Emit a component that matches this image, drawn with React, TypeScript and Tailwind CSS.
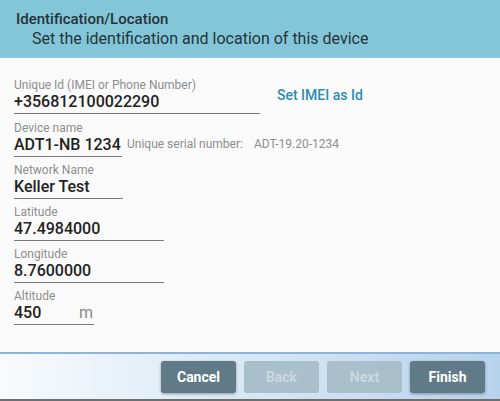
import React from "react";

// ─── FIELD ─────────────────────────────────────────────────────────────────────
function Field({ label, value, width, unit, className = "" }: { label: string; value: string; width: string; unit?: string; className?: string }) {
  return (
    <div className={`${width} ${className} flex flex-col border-b border-[#7a7a7a] pb-[1px]`}>
      <span className="h-[13px] text-[12px] leading-[13px] text-[#8e8e8e] whitespace-nowrap">{label}</span>
      <div className="flex h-[20px] items-baseline justify-between">
        <span className="text-[16px] leading-[20px] font-medium text-[#222222] whitespace-nowrap">{value}</span>
        {unit && <span className="pr-[1px] text-[16px] leading-[20px] text-[#8a8a8a]">{unit}</span>}
      </div>
    </div>
  );
}

export default function App() {
  return (
    <div className="flex h-[401px] w-[500px] flex-col overflow-hidden bg-[#fafafa]" style={{ fontFamily: "Roboto, 'Noto Sans', sans-serif" }}>
      {/* Header */}
      <div className="flex h-[58px] flex-shrink-0 flex-col border-b border-[#9cc3dc] bg-[#82c6d8] pl-[16px] pt-[9px] text-[#25343b]">
        <span className="text-[15px] font-medium leading-[20px]">Identification/Location</span>
        <span className="pl-[16px] text-[16px] leading-[20px]">Set the identification and location of this device</span>
      </div>

      {/* Content */}
      <div className="flex flex-1 flex-col gap-[7px] pl-[14px] pt-[21px]">
        <div className="mb-[1px] flex items-center">
          <Field label="Unique Id (IMEI or Phone Number)" value="+356812100022290" width="w-[246px]" />
          <button className="ml-[17px] pb-[4px] text-[14px] font-medium leading-[20px] text-[#2b8cb3]">Set IMEI as Id</button>
        </div>
        <div className="flex items-end">
          <Field label="Device name" value="ADT1-NB 1234" width="w-[108px]" />
          <div className="ml-[5px] flex pb-[6px] text-[12px] leading-[13px] text-[#8e8e8e]">
            <span>Unique serial number:</span>
            <span className="ml-[11px]">ADT-19.20-1234</span>
          </div>
        </div>
        <Field label="Network Name" value="Keller Test" width="w-[109px]" />
        <Field label="Latitude" value="47.4984000" width="w-[150px]" />
        <Field label="Longitude" value="8.7600000" width="w-[150px]" />
        <Field label="Altitude" value="450" unit="m" width="w-[80px]" />
      </div>

      {/* Footer */}
      <div className="flex h-[47px] flex-shrink-0 items-start justify-end gap-[8px] border-t-2 border-[#8db3d6] bg-gradient-to-r from-[#f8fbfd] to-[#b7d3ec] pr-[15px] pt-[7px]">
        <button className="h-[32px] w-[75px] rounded-[3px] bg-[#607b87] text-[14px] font-bold text-white shadow-[0_1px_3px_rgba(0,0,0,0.35)]">Cancel</button>
        <button className="h-[32px] w-[75px] rounded-[3px] bg-[#a9bfcb] text-[14px] font-bold text-[#c9d8e0]">Back</button>
        <button className="h-[32px] w-[75px] rounded-[3px] bg-[#a9bfcb] text-[14px] font-bold text-[#c9d8e0]">Next</button>
        <button className="h-[32px] w-[75px] rounded-[3px] bg-[#607b87] text-[14px] font-bold text-white shadow-[0_1px_3px_rgba(0,0,0,0.35)]">Finish</button>
      </div>
      <div className="h-[2px] flex-shrink-0 bg-[#6e6e6e]" />
    </div>
  );
}
